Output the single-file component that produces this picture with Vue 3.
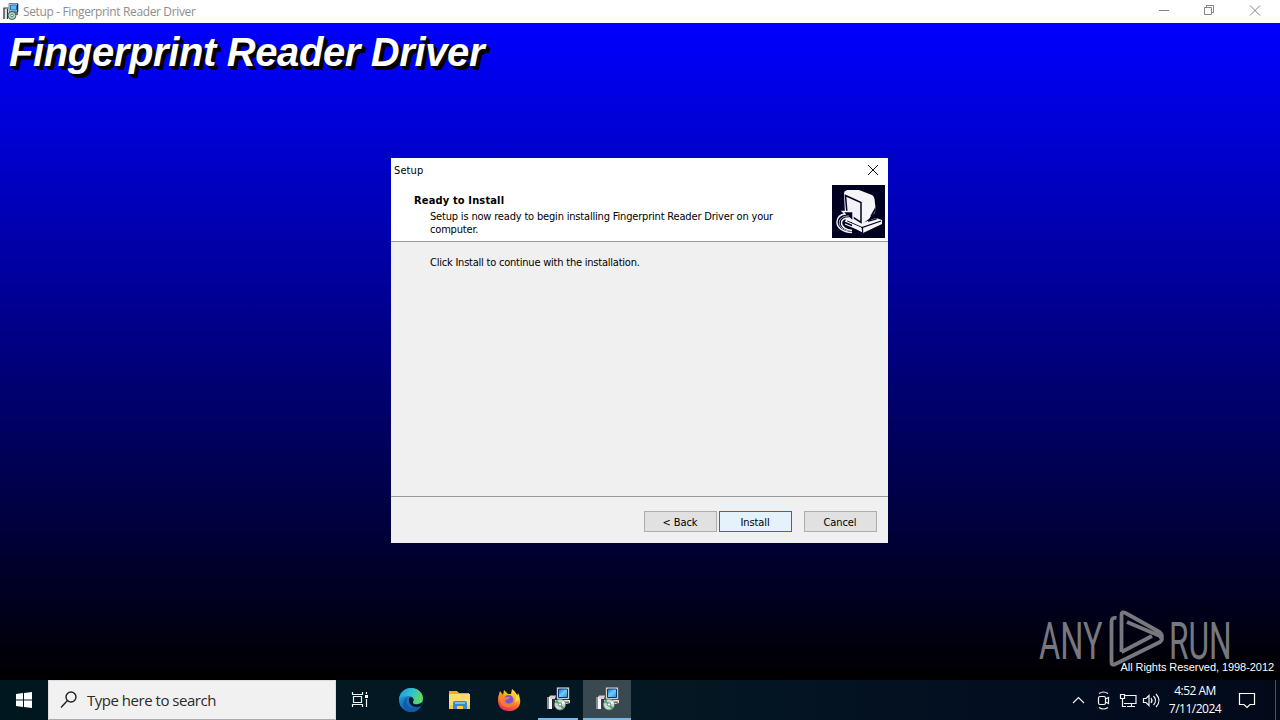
<script setup>
const programs = [{ id: 'first', active: false }, { id: 'second', active: true }]
</script>

<template>
  <main class="screen">
    <svg class="defs" width="0" height="0">
      <defs>
        <linearGradient id="edgeA" x1="0" y1="0.2" x2="1" y2="0.5"><stop offset="0" stop-color="#2497d8" /><stop offset=".5" stop-color="#2fc2d0" /><stop offset="1" stop-color="#64dc58" /></linearGradient>
        <linearGradient id="edgeB" x1="0" y1="0" x2="0.6" y2="1"><stop offset="0" stop-color="#2aa5e5" /><stop offset="1" stop-color="#0c55a8" /></linearGradient>
        <linearGradient id="fire" x1=".8" y1="0" x2=".3" y2="1"><stop offset="0" stop-color="#fff04a" /><stop offset=".4" stop-color="#ffac25" /><stop offset=".7" stop-color="#ff5a35" /><stop offset="1" stop-color="#ee2a67" /></linearGradient>
        <linearGradient id="display" x1="0" y1="0" x2="1" y2="1"><stop offset="0" stop-color="#126bc4" /><stop offset=".5" stop-color="#70cdfb" /><stop offset="1" stop-color="#1688dc" /></linearGradient>
        <symbol id="setup" viewBox="0 0 24 24">
          <path d="M1 10h4v12H1z" fill="#8d8b95" /><path d="M3 9.500h3V22H3z" fill="#faf8fa" />
          <path d="M4 8.500h6l-1 3.500H4z" fill="#d4cdd2" /><path d="M6.500 12H9l-1 9H6.500z" fill="#36343e" />
          <path d="M11 .5h12V12H11z" fill="#f4ecdc" stroke="#8d8a8a" stroke-width=".6" />
          <path d="M12.500 2h9v8.500h-9z" fill="url(#display)" stroke="#073878" />
          <path d="M9 13h15v3l-4 1H9z" fill="#e8ded8" /><path d="M18 14.500h5V16h-5z" fill="#786d77" />
          <circle cx="14" cy="17.500" r="5.500" fill="#c7ddd0" stroke="#607068" stroke-width=".7" />
          <path d="m14 17.500-5-2 2-3zM14 17.500l5 3-3 2z" fill="#4fa870" /><path d="m14 17.500 4-4 1 3z" fill="#eff9ef" /><circle cx="14" cy="17.500" r="1.700" fill="#fff" stroke="#657a72" />
        </symbol>
        <symbol id="setupSmall" viewBox="0 0 17 17">
          <path d="M1 5h3v11H1z" fill="#777680" /><path d="M3 5h3v11H3z" fill="#e1dde2" /><path d="M1.500 5h5M5.500 6v10" stroke="#35343c" />
          <path d="M7 .5h9v8H7z" fill="#d8dfeb" stroke="#5c6470" stroke-width=".8" /><path d="M8.500 2h6v5h-6z" fill="#62b8ed" stroke="#2471b4" />
          <path d="M6 9h10v3h-4z" fill="#716e78" /><path d="M15.500 1v8" stroke="#23242c" />
          <circle cx="10" cy="12.500" r="4" fill="#acd4c2" stroke="#25463c" stroke-width=".8" /><circle cx="10" cy="12.500" r="1.300" fill="#fff" stroke="#558472" />
        </symbol>
      </defs>
    </svg>
    <header class="titlebar">
      <svg class="appicon" width="17" height="17"><use href="#setupSmall" /></svg>
      <span class="wintitle">Setup - Fingerprint Reader Driver</span>
      <svg class="controls" width="138" height="23" fill="none" stroke="#858585">
        <path d="M17 10.500h10M62.500 7.500h7v7h-7zM64.500 7v-1.500h7v7h-1.500M108 5.500l10 10M118 5.500l-10 10" />
      </svg>
    </header>
    <section class="desktop">
      <h1>Fingerprint Reader Driver</h1>
      <article class="dialog">
        <div class="dialoghead">
          <div class="dialogtitle"><span>Setup</span><svg width="12" height="12" stroke="#111"><path d="m1 1 10 10M11 1 1 11" /></svg></div>
          <div class="intro">
            <div class="introtext"><h2>Ready to Install</h2><p>Setup is now ready to begin installing Fingerprint Reader Driver on your<br>computer.</p></div>
            <svg class="wizard" width="53" height="53" viewBox="0 0 53 53">
              <path d="M0 0h53v53H0z" fill="#000020" />
              <path d="m13 28 17 10 14-5 6 2v4L31 48 14 38z" fill="#f5f5f8" />
              <path d="M12 8q0-2 3-3h12l13 5q2 1 2.500 4L44 27l-3 4-11 8-17-9z" fill="#f5f5f8" />
              <path d="m13.500 10.500 15.500 7v20l-14-9z" fill="#f2f2f6" stroke="#000020" stroke-width="1.500" />
              <path d="m43 24 1 10-7 2zM39 31l4-7M15 36l15 6.500L49 36M30.500 42v6" fill="none" stroke="#000020" stroke-width="1.300" />
              <path d="m42.500 27-4.500 7 5-1.500z" fill="#000020" />
              <path d="M12 37v6l8 3v-9z" fill="#000020" />
              <path d="m13 36 16 7M13 39l17 7" stroke="#f5f5f8" stroke-width="1.200" />
              <path d="M20 47.500C10 47 4.500 42 5 36.500 5.500 32 9 29.500 13 29l-2.500-2.500H21v10L17.500 33c-5 0-8 2-8 5 0 4 5 7 10.500 7.500" fill="#000020" stroke="#f5f5f8" stroke-width="1.400" />
              <path d="M16 46C9 44 6.500 40 7.500 36c1-3 4-5 9.500-5" fill="none" stroke="#b9b9c6" stroke-width="1" />
            </svg>
          </div>
        </div>
        <div class="dialogbody"><p>Click Install to continue with the installation.</p></div>
        <footer><button class="back">&lt; Back</button><button class="install">Install</button><button class="cancel">Cancel</button></footer>
      </article>
      <div class="watermark">
        <span class="any">ANY</span>
        <svg width="56" height="60" viewBox="0 0 56 60" fill="none" stroke="#77777e" stroke-width="3.800" stroke-linejoin="round">
          <path d="M7.500 8Q2.500 7 2.500 12v40q0 4 4 2L51 32q4-3 0-6L18 12M12.500 42V5q0-4 4-2l34 19q5 4 0 7" />
          <path d="M12.500 42 43 26" />
        </svg>
        <span class="run">RUN</span>
      </div>
      <span class="rights">All Rights Reserved, 1998-2012</span>
    </section>
    <nav class="taskbar">
      <div class="start"><svg width="16" height="16" fill="#fff"><path d="M0 2 7 1v6.500H0zM8 1l8-1v7.500H8zM0 8.500h7V15l-7-1zM8 8.500h8V16l-8-1z" /></svg></div>
      <div class="search"><svg width="18" height="18" fill="none" stroke="#222" stroke-width="1.400"><circle cx="11" cy="6" r="5" /><path d="m7.500 9.500-6.500 7" /></svg><span>Type here to search</span></div>
      <div class="task"><svg width="18" height="18" fill="none" stroke="#eef1f2" stroke-width="1.200"><path d="M1.500 1v2.500h10V1M1.500 16v-2.500h10V16M2.500 5.500h8v6h-8zM15.500 1v2M15.500 8v8" /><path d="M14 4h3v3h-3z" fill="#fff" stroke="none" /></svg></div>
      <div class="edge"><svg width="24" height="24" viewBox="0 0 24 24"><circle cx="12" cy="12" r="12" fill="url(#edgeB)" /><path d="M0 11C1 4 6 0 12 0c7 0 12 5 12 10 0 5-3 6-7 6-3 0-4-1-3-3 1-3-1-5-4-5-4 0-8 1-10 3" fill="url(#edgeA)" /><path d="M9 9c-3 4-1 10 4 11 4 1 7 0 9-2-3 6-9 7-14 5C2 20 3 11 9 9" fill="#125ba9" /><path d="M10 10c3-2 6 1 4 4-1 2 3 4 8 1l2-1-2 4c-7 3-13-1-12-8" fill="#041823" /></svg></div>
      <div class="folder"><svg width="23" height="19" viewBox="0 0 23 19"><path d="M1 0h8l2 2h10v5H1z" fill="#f4ab24" /><path d="M1 3h21v15H1z" fill="#ffdc70" /><path d="M1 14h21v4H1z" fill="#ffca45" /><path d="M5 18v-6q0-2 2-2h10q2 0 2 2v6h-4v-3H9v3z" fill="#318ecf" /><path d="M7 11h10v2H7z" fill="#74bfec" /></svg></div>
      <div class="firefox"><svg width="24" height="24" viewBox="0 0 24 24"><path d="M2 6 3 3l3 4 1-5 4 4h3l1-5c2 2 4 3 5 7l1-3c6 12-1 18-9 18C2 23-1 14 2 6" fill="url(#fire)" /><circle cx="11.500" cy="12" r="5" fill="#7954d8" /><path d="M2 7c3-1 5 0 7 2h4c-1 3-4 2-5 4 2 4 7 3 9-1 2 6-4 8-8 7-4 0-7-5-7-12" fill="#ff8b26" opacity=".75" /><path d="M15 1c4 3 5 8 3 13l4-2c0-5-4-7-7-11" fill="#ffe142" /></svg></div>
      <div v-for="program in programs" :key="program.id" class="program" :class="{ active: program.active }"><svg width="24" height="24"><use href="#setup" /></svg></div>
      <div class="tray">
        <svg width="92" height="20" fill="none" stroke="#f2f4f5" stroke-width="1.200">
          <path d="m1 13 5.500-5.500L12 13M27 3.500q4.500-3 9 0M27 17.500q4.500 3 9 0" />
          <rect x="26.500" y="6.500" width="7" height="8" rx="1.500" /><path d="m33.500 9 3-1.500v6l-3-1.500" />
          <path d="M52 5.500h12v8H52M55 16.500h8M59.500 13.500v3M48.500 4.500h4v4h-4zM50.500 8.500v8H54M71.500 8.500h2.500l3-3v10l-3-3h-2.500zM79 8q2 2.500 0 5M81.500 6q4 4.500 0 9M84 4q6 6.500 0 13" />
        </svg>
        <div class="clock"><span>4:52 AM</span><span>7/11/2024</span></div>
        <svg class="notice" width="18" height="18" fill="none" stroke="#fff" stroke-width="1.200"><path d="M1.500 2.500h15v11H12l-3 3-3-3H1.500z" /></svg>
        <i class="peek"></i>
      </div>
    </nav>
  </main>
</template>

<style>
body { margin: 0; overflow: hidden; }
</style>
<style scoped>
* { box-sizing: border-box; }
.screen { width: 1280px; height: 720px; display: flex; flex-direction: column; overflow: hidden; font-family: "DejaVu Sans Condensed", "DejaVu Sans", sans-serif; }
.defs { position: absolute; }
.titlebar { height: 23px; flex: none; background: #fff; display: flex; align-items: center; color: #8d8d8d; }
.appicon { margin: 0 0 1px 2px; }
.wintitle { margin-left: 4px; font: 12px "Open Sans", sans-serif; line-height: 23px; letter-spacing: -.36px; white-space: nowrap; }
.controls { margin-left: auto; }
.desktop { position: relative; height: 657px; flex: none; background: linear-gradient(#00f, #000); display: flex; justify-content: center; }
h1 { position: absolute; left: 9px; top: 6px; margin: 0; font: italic bold 40px/46px "Liberation Sans", sans-serif; letter-spacing: -.38px; color: #fff; text-shadow: 2px 2px 0 #000, 3px 3px 0 #000, 4px 4px 0 #000; white-space: nowrap; }
.dialog { width: 497px; height: 385px; margin-top: 135px; margin-right: 1px; background: #f0f0f0; display: flex; flex-direction: column; color: #000; font-size: 11px; }
.dialoghead { height: 84px; background: #fff; border-bottom: 1px solid #999; flex: none; }
.dialogtitle { height: 24px; display: flex; justify-content: space-between; align-items: center; padding: 0 9px 0 3px; }
.dialogtitle span { letter-spacing: .12px; }
.intro { display: flex; justify-content: space-between; padding: 3px 3px 0 23px; }
.introtext { padding-top: 9px; white-space: nowrap; }
h2 { margin: 0; font-size: 11px; line-height: 13px; font-weight: bold; letter-spacing: .15px; }
.introtext p { margin: 3px 0 0 16px; line-height: 13px; letter-spacing: -.18px; }
.dialogbody { height: 255px; flex: none; border-bottom: 1px solid #999; padding: 14px 0 0 39px; }
.dialogbody p { margin: 0; line-height: 14px; letter-spacing: -.22px; }
footer { display: flex; justify-content: flex-end; padding: 14px 11px 0; }
button { width: 73px; height: 21px; padding: 1px 1px 0 0; border: 1px solid #adadad; background: #e1e1e1; color: #000; font: inherit; line-height: 20px; letter-spacing: -.1px; }
.install { margin-left: 2px; border-color: #1877b4; background: #e5f1fb; }
.cancel { margin-left: 12px; }
.watermark { position: absolute; left: 1039px; top: 587px; width: 193px; height: 60px; color: #77777e; font: 400 52px/60px Roboto, sans-serif; }
.watermark span { position: absolute; top: 2px; transform-origin: left; white-space: nowrap; }
.watermark .any { left: 0; transform: scaleX(.625); }
.watermark svg { position: absolute; left: 70px; top: 0; }
.watermark .run { left: 130px; transform: scaleX(.61); }
.rights { position: absolute; right: 6px; bottom: 6px; color: #fff; font: 11px/14px "Liberation Sans", sans-serif; letter-spacing: -.06px; text-shadow: 1px 1px #000; }
.taskbar { height: 40px; flex: none; display: flex; background: linear-gradient(90deg, #001720, #041823 50%, #030d20 83%, #020a1a); }
.taskbar > div { flex: none; height: 40px; display: flex; align-items: center; justify-content: center; }
.taskbar .start { width: 48px; }
.taskbar .search { width: 288px; justify-content: flex-start; padding-left: 11px; background: #f1f1f1; border: 1px solid #ddd; border-bottom-color: #aaa; color: #2b2b2b; font: 15px "Open Sans", sans-serif; }
.search span { margin-left: 9px; letter-spacing: -.48px; white-space: nowrap; }
.taskbar .task { width: 48px; }
.taskbar .edge { width: 54px; }
.taskbar .folder { width: 43px; }
.taskbar .firefox { width: 54px; padding-left: 1px; }
.taskbar .program { width: 40px; margin-left: 3px; margin-right: 5px; border-bottom: 2px solid #76b9ed; }
.taskbar .program.active { width: 48px; margin: 0; background: #3a4850; }
.taskbar .tray { margin-left: auto; width: 210px; justify-content: flex-start; padding-left: 2px; }
.clock { width: 60px; margin-left: 1px; color: #fff; font: 12px/18px "Open Sans", sans-serif; letter-spacing: -.5px; display: flex; flex-direction: column; align-items: center; }
.notice { margin-left: 13px; }
.peek { height: 40px; width: 1px; margin-left: 19px; background: #4c5260; }
</style>
